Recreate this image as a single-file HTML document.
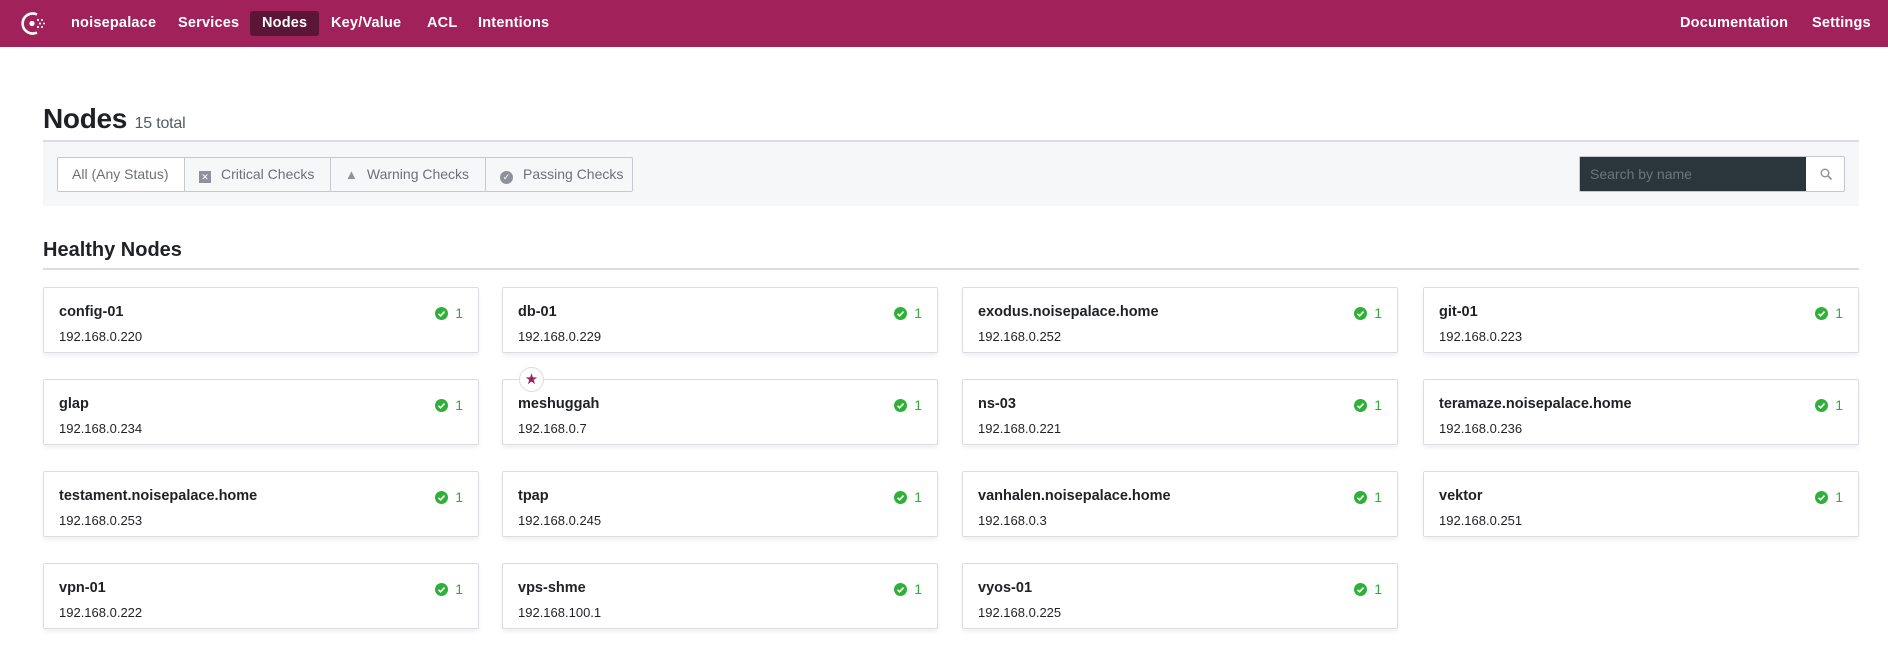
<!DOCTYPE html>
<html><head><meta charset="utf-8"><style>
*{box-sizing:border-box;margin:0;padding:0}
body{width:1888px;height:657px;background:#fff;font-family:"Liberation Sans",sans-serif;color:#1f2124;position:relative;overflow:hidden}
.nav{position:absolute;left:0;top:0;width:1888px;height:47px;background:#a1215a}
.nav a{position:absolute;top:15px;color:#fff;font-weight:bold;font-size:14.5px;text-decoration:none;letter-spacing:0.2px}
.act{position:absolute;left:250px;top:11px;width:69px;height:25px;background:#5b1537;border-radius:3px}
h1{position:absolute;left:43px;top:103px;font-size:28px;font-weight:bold;color:#1f2124;letter-spacing:-0.3px}
h1 span{font-size:16px;font-weight:normal;color:#555a60;margin-left:0;letter-spacing:-0.2px}
.bar{position:absolute;left:43px;top:140px;width:1816px;height:66px;background:#f6f7f9;border-top:2px solid #dcdde3}
.btns{position:absolute;left:57px;top:157px;height:35px;width:576px;border:1px solid #c5c8d0;border-radius:2px;background:#f6f7f9;display:flex}
.btns div{height:33px;line-height:33px;font-size:14px;color:#6c7079;border-right:1px solid #c5c8d0;padding-left:14px}
.btns div:last-child{border-right:none}
.search{position:absolute;left:1579px;top:156px;width:266px;height:36px;border:1px solid #c5c8d0;border-radius:2px;background:#fff}
.search .d{position:absolute;left:0;top:0;width:226px;height:34px;background:#2a353c;color:#6c767d;font-size:14px;line-height:34px;padding-left:10px}
h2{position:absolute;left:43px;top:239px;font-size:20px;font-weight:bold;color:#1f2124}
.hl{position:absolute;left:43px;top:268px;width:1816px;height:2px;background:#dcdde3}
.card{position:absolute;width:436px;height:66px;border:1px solid #dcdde3;border-radius:2px;background:#fff;box-shadow:0 3px 5px rgba(0,0,0,0.06)}
.card b{position:absolute;left:15px;top:16px;font-size:14.5px;color:#1f2124}
.card i{position:absolute;left:15px;top:41px;font-style:normal;font-size:13px;color:#1f2124}
.chk{position:absolute;right:30px;top:19px;width:13px;height:13px;border-radius:50%;background:#2eb039}
.chk svg{position:absolute;left:0;top:0}
.n{position:absolute;right:15px;top:17px;font-size:14px;color:#2eb039}
.star{position:absolute;left:519px;top:367px;width:25px;height:25px;border-radius:50%;border:1px solid #dcdde3;background:#fff;color:#a1215a;font-size:15px;text-align:center;line-height:23px}
</style></head><body>
<div class="nav">
<svg style="position:absolute;left:19px;top:10px" width="30" height="27" viewBox="0 0 30 27"><path d="M18 4.5A10 10 0 1 0 18 22.5" fill="none" stroke="#fff" stroke-width="2.6"/><circle cx="13" cy="13.5" r="2.6" fill="#fff"/><circle cx="19" cy="10" r="1.1" fill="#fff"/><circle cx="19" cy="17" r="1.1" fill="#fff"/><circle cx="21" cy="13.5" r="1.1" fill="#fff"/><circle cx="23" cy="10" r="1" fill="#fff"/><circle cx="23" cy="17" r="1" fill="#fff"/><circle cx="25" cy="13.5" r="1" fill="#fff"/></svg>
<div class="act"></div>
<a style="left:71px">noisepalace</a><a style="left:178px">Services</a><a style="left:262px">Nodes</a><a style="left:331px">Key/Value</a><a style="left:427px">ACL</a><a style="left:478px">Intentions</a>
<a style="left:1680px">Documentation</a><a style="left:1812px">Settings</a>
</div>
<h1>Nodes <span>15 total</span></h1>
<div class="bar"></div>
<div class="btns">
<div style="width:127px;background:#fff;color:#6c7079">All (Any Status)</div>
<div style="width:146px"><span style="display:inline-block;width:12px;height:12px;background:#8e929a;color:#fff;font-size:9px;line-height:12px;text-align:center;margin-right:10px;vertical-align:-1px">✕</span>Critical Checks</div>
<div style="width:155px"><span style="color:#8e929a;font-size:13px;margin-right:9px">▲</span>Warning Checks</div>
<div style="width:146px"><span style="display:inline-block;width:13px;height:13px;border-radius:50%;background:#8e929a;color:#fff;font-size:9px;line-height:13px;text-align:center;margin-right:10px;vertical-align:-1px">✓</span>Passing Checks</div>
</div>
<div class="search"><div class="d">Search by name</div>
<svg style="position:absolute;left:240px;top:11px" width="13" height="13" viewBox="0 0 13 13"><circle cx="5" cy="5" r="3.8" fill="none" stroke="#8e929a" stroke-width="1.4"/><path d="M8 8L11.5 11.5" stroke="#8e929a" stroke-width="1.6"/></svg></div>
<h2>Healthy Nodes</h2>
<div class="hl"></div>
<div id="c"></div>
<script>
var d=[["config-01","192.168.0.220"],["db-01","192.168.0.229"],["exodus.noisepalace.home","192.168.0.252"],["git-01","192.168.0.223"],["glap","192.168.0.234"],["meshuggah","192.168.0.7"],["ns-03","192.168.0.221"],["teramaze.noisepalace.home","192.168.0.236"],["testament.noisepalace.home","192.168.0.253"],["tpap","192.168.0.245"],["vanhalen.noisepalace.home","192.168.0.3"],["vektor","192.168.0.251"],["vpn-01","192.168.0.222"],["vps-shme","192.168.100.1"],["vyos-01","192.168.0.225"]];
var xs=[43,502,962,1423],h="";
d.forEach(function(e,i){h+='<div class="card" style="left:'+xs[i%4]+'px;top:'+(287+92*Math.floor(i/4))+'px"><b>'+e[0]+'</b><i>'+e[1]+'</i><span class="chk"><svg width="13" height="13"><path d="M3.5 6.8L5.6 8.8L9.5 4.6" fill="none" stroke="#fff" stroke-width="1.6"/></svg></span><span class="n">1</span></div>';});
document.getElementById("c").innerHTML=h;
</script>
<div class="star">★</div>
</body></html>
